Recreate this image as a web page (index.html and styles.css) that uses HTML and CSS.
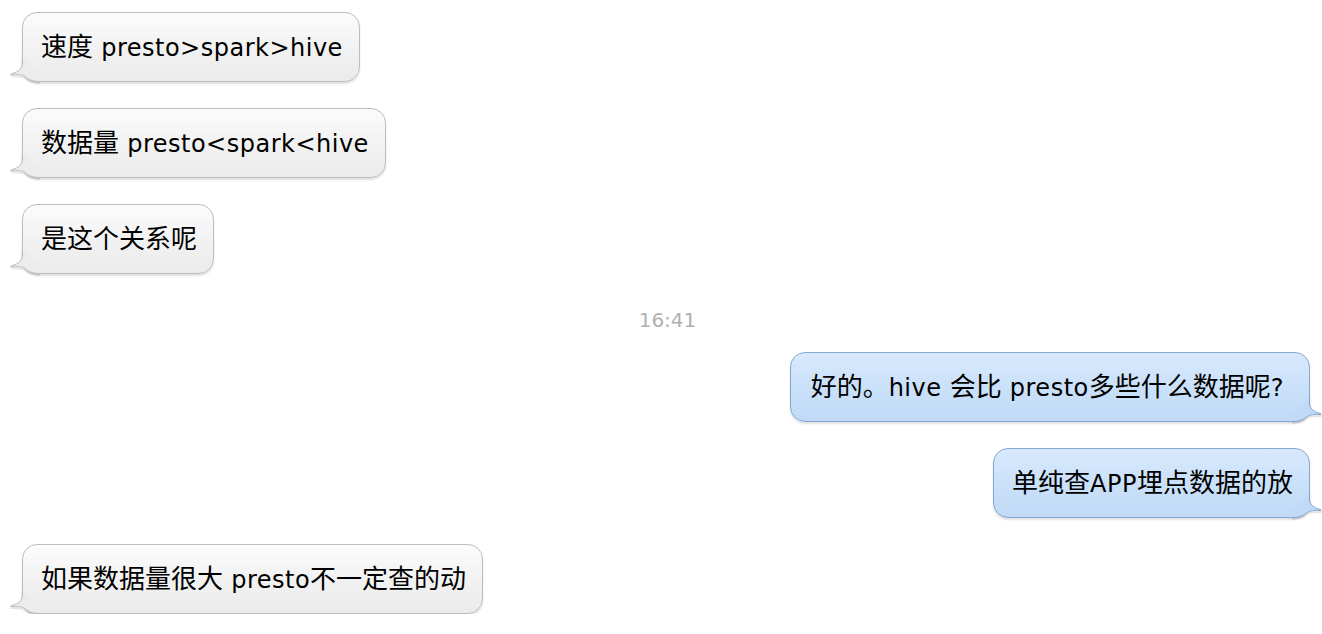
FILE: index.html
```html
<!DOCTYPE html>
<html lang="zh-CN">
<head>
<meta charset="utf-8">
<title>Chat</title>
<link rel="stylesheet" href="styles.css">
</head>
<body>
<main class="chat">
  <div class="row in">
    <div class="bubble gray"><span class="txt"><span class="zh">速度</span> presto&gt;spark&gt;hive</span>
      <svg class="tail" width="30" height="25" viewBox="0 0 30 25"><path class="tail-shadow" d="M12.5,0 L12.5,6 C12.5,11 9,15 1.5,16.5 Q0.3,17 1.5,17.5 C8,17.5 12,17.5 15,19.5 C18,22 21,24.5 30,24.5"/><path class="tail-fill" d="M12.5,0 L12.5,6 C12.5,11 9,15 1.5,16.5 Q0.3,17 1.5,17.5 C8,17.5 12,17.5 15,19.5 C18,22 21,24.5 30,24.5 L30,17 L20,8 L13,0 Z"/><path class="tail-line" d="M12.5,0 L12.5,6 C12.5,11 9,15 1.5,16.5 Q0.3,17 1.5,17.5 C8,17.5 12,17.5 15,19.5 C18,22 21,24.5 30,24.5"/></svg>
    </div>
  </div>
  <div class="row in">
    <div class="bubble gray"><span class="txt"><span class="zh">数据量</span> presto&lt;spark&lt;hive</span>
      <svg class="tail" width="30" height="25" viewBox="0 0 30 25"><path class="tail-shadow" d="M12.5,0 L12.5,6 C12.5,11 9,15 1.5,16.5 Q0.3,17 1.5,17.5 C8,17.5 12,17.5 15,19.5 C18,22 21,24.5 30,24.5"/><path class="tail-fill" d="M12.5,0 L12.5,6 C12.5,11 9,15 1.5,16.5 Q0.3,17 1.5,17.5 C8,17.5 12,17.5 15,19.5 C18,22 21,24.5 30,24.5 L30,17 L20,8 L13,0 Z"/><path class="tail-line" d="M12.5,0 L12.5,6 C12.5,11 9,15 1.5,16.5 Q0.3,17 1.5,17.5 C8,17.5 12,17.5 15,19.5 C18,22 21,24.5 30,24.5"/></svg>
    </div>
  </div>
  <div class="row in">
    <div class="bubble gray"><span class="txt"><span class="zh">是这个关系呢</span></span>
      <svg class="tail" width="30" height="25" viewBox="0 0 30 25"><path class="tail-shadow" d="M12.5,0 L12.5,6 C12.5,11 9,15 1.5,16.5 Q0.3,17 1.5,17.5 C8,17.5 12,17.5 15,19.5 C18,22 21,24.5 30,24.5"/><path class="tail-fill" d="M12.5,0 L12.5,6 C12.5,11 9,15 1.5,16.5 Q0.3,17 1.5,17.5 C8,17.5 12,17.5 15,19.5 C18,22 21,24.5 30,24.5 L30,17 L20,8 L13,0 Z"/><path class="tail-line" d="M12.5,0 L12.5,6 C12.5,11 9,15 1.5,16.5 Q0.3,17 1.5,17.5 C8,17.5 12,17.5 15,19.5 C18,22 21,24.5 30,24.5"/></svg>
    </div>
  </div>
  <div class="time">16:41</div>
  <div class="row out">
    <div class="bubble blue wide"><span class="txt"><span class="zh">好的。</span>hive <span class="zh">会比</span> presto<span class="zh">多些什么数据呢</span><span class="q">?</span></span>
      <svg class="tail" width="30" height="25" viewBox="0 0 30 25"><path class="tail-shadow" d="M12.5,0 L12.5,6 C12.5,11 9,15 1.5,16.5 Q0.3,17 1.5,17.5 C8,17.5 12,17.5 15,19.5 C18,22 21,24.5 30,24.5"/><path class="tail-fill" d="M12.5,0 L12.5,6 C12.5,11 9,15 1.5,16.5 Q0.3,17 1.5,17.5 C8,17.5 12,17.5 15,19.5 C18,22 21,24.5 30,24.5 L30,17 L20,8 L13,0 Z"/><path class="tail-line" d="M12.5,0 L12.5,6 C12.5,11 9,15 1.5,16.5 Q0.3,17 1.5,17.5 C8,17.5 12,17.5 15,19.5 C18,22 21,24.5 30,24.5"/></svg>
    </div>
  </div>
  <div class="row out">
    <div class="bubble blue"><span class="txt"><span class="zh">单纯查</span>APP<span class="zh">埋点数据的放</span></span>
      <svg class="tail" width="30" height="25" viewBox="0 0 30 25"><path class="tail-shadow" d="M12.5,0 L12.5,6 C12.5,11 9,15 1.5,16.5 Q0.3,17 1.5,17.5 C8,17.5 12,17.5 15,19.5 C18,22 21,24.5 30,24.5"/><path class="tail-fill" d="M12.5,0 L12.5,6 C12.5,11 9,15 1.5,16.5 Q0.3,17 1.5,17.5 C8,17.5 12,17.5 15,19.5 C18,22 21,24.5 30,24.5 L30,17 L20,8 L13,0 Z"/><path class="tail-line" d="M12.5,0 L12.5,6 C12.5,11 9,15 1.5,16.5 Q0.3,17 1.5,17.5 C8,17.5 12,17.5 15,19.5 C18,22 21,24.5 30,24.5"/></svg>
    </div>
  </div>
  <div class="row in">
    <div class="bubble gray"><span class="txt"><span class="zh">如果数据量很大</span> presto<span class="zh">不一定查的动</span></span>
      <svg class="tail" width="30" height="25" viewBox="0 0 30 25"><path class="tail-shadow" d="M12.5,0 L12.5,6 C12.5,11 9,15 1.5,16.5 Q0.3,17 1.5,17.5 C8,17.5 12,17.5 15,19.5 C18,22 21,24.5 30,24.5"/><path class="tail-fill" d="M12.5,0 L12.5,6 C12.5,11 9,15 1.5,16.5 Q0.3,17 1.5,17.5 C8,17.5 12,17.5 15,19.5 C18,22 21,24.5 30,24.5 L30,17 L20,8 L13,0 Z"/><path class="tail-line" d="M12.5,0 L12.5,6 C12.5,11 9,15 1.5,16.5 Q0.3,17 1.5,17.5 C8,17.5 12,17.5 15,19.5 C18,22 21,24.5 30,24.5"/></svg>
    </div>
  </div>
</main>
</body>
</html>
```
FILE: styles.css
```css
html, body {
  margin: 0;
  padding: 0;
  background: #ffffff;
}
body {
  font-family: "DejaVu Sans", "Noto Sans CJK SC", sans-serif;
  color: #000;
  overflow: hidden;
}
.chat {
  display: flex;
  flex-direction: column;
  gap: 26px;
  padding: 12px 12px 0 22px;
}
.row {
  display: flex;
}
.row.in { justify-content: flex-start; }
.row.out { justify-content: flex-end; }
.bubble {
  position: relative;
  box-sizing: border-box;
  height: 70px;
  border-radius: 15px;
  border: 1px solid #bdbdbd;
  padding: 0 16px 0 18px;
  display: flex;
  align-items: center;
  font-size: 24px;
  letter-spacing: 0.5px;
  white-space: nowrap;
  box-shadow: 0 2px 2px rgba(0, 0, 0, 0.12);
}
.txt {
  display: block;
  line-height: 32px;
  margin-top: -2px;
}
.zh {
  font-family: "Noto Sans CJK SC", sans-serif;
  font-size: 26px;
  letter-spacing: 0;
}
.q {
  margin-right: 9px;
}
.bubble.wide {
  padding-left: 20px;
}
.bubble.gray {
  background: linear-gradient(#fcfcfc, #f1f1f1 55%, #ebebeb);
}
.bubble.blue {
  border-color: #82a8d0;
  background: linear-gradient(#d8e9fd, #c9e0f9 55%, #c0daf6);
}
.tail {
  position: absolute;
  left: -13px;
  bottom: -1px;
  overflow: visible;
}
.tail-shadow {
  fill: none;
  stroke: rgba(0, 0, 0, 0.1);
  stroke-width: 2;
  transform: translateY(1.5px);
}
.gray .tail-fill { fill: #ececec; }
.gray .tail-line { fill: none; stroke: #bdbdbd; stroke-width: 1; }
.blue .tail-fill { fill: #c1dbf6; }
.blue .tail-line { fill: none; stroke: #82a8d0; stroke-width: 1; }
.out .tail {
  left: auto;
  right: -13px;
  transform: scaleX(-1);
}
.time {
  align-self: center;
  margin: 7px 0 -7px 0;
  height: 26px;
  line-height: 26px;
  font-size: 20px;
  color: #b0b0b0;
  font-family: "DejaVu Sans", sans-serif;
  padding-left: 3px;
}
```
